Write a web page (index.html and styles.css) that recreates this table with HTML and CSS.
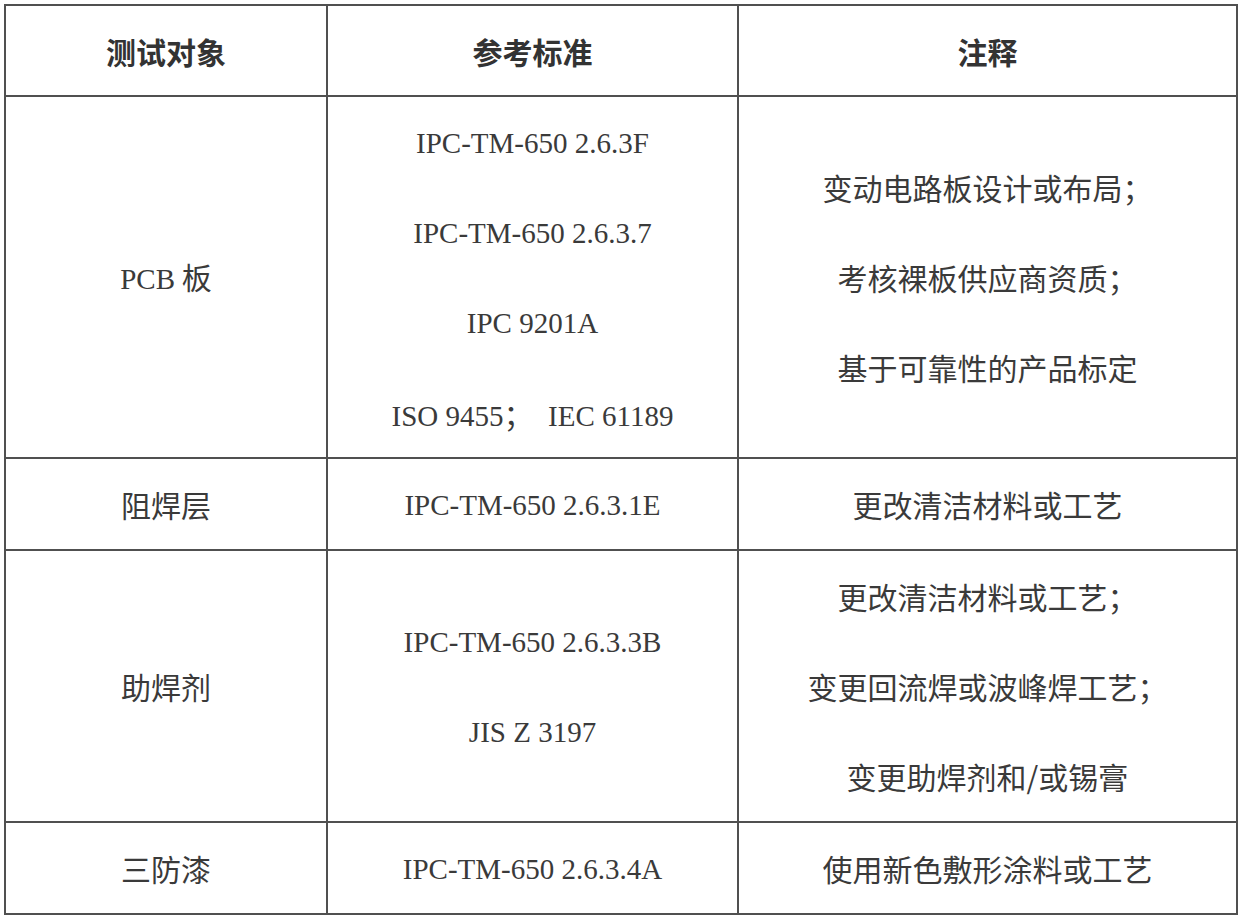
FILE: index.html
```html
<!DOCTYPE html>
<html lang="zh-CN">
<head>
<meta charset="utf-8">
<title>测试对象</title>
<link rel="stylesheet" href="styles.css">
</head>
<body>
<table class="spec">
  <colgroup>
    <col class="c1">
    <col class="c2">
    <col class="c3">
  </colgroup>
  <thead>
    <tr class="head">
      <th>测试对象</th>
      <th>参考标准</th>
      <th>注释</th>
    </tr>
  </thead>
  <tbody>
    <tr>
      <td class="cn"><span class="en">PCB</span> 板</td>
      <td class="en">
        <div class="ln">IPC-TM-650 2.6.3F</div>
        <div class="ln">IPC-TM-650 2.6.3.7</div>
        <div class="ln">IPC 9201A</div>
        <div class="ln">ISO 9455<span class="cn">；</span>&nbsp;&nbsp;IEC 61189</div>
      </td>
      <td class="cn">
        <div class="ln">变动电路板设计或布局；</div>
        <div class="ln">考核裸板供应商资质；</div>
        <div class="ln">基于可靠性的产品标定</div>
      </td>
    </tr>
    <tr>
      <td class="cn">阻焊层</td>
      <td class="en"><div class="ln">IPC-TM-650 2.6.3.1E</div></td>
      <td class="cn"><div class="ln">更改清洁材料或工艺</div></td>
    </tr>
    <tr>
      <td class="cn">助焊剂</td>
      <td class="en">
        <div class="ln">IPC-TM-650 2.6.3.3B</div>
        <div class="ln">JIS Z 3197</div>
      </td>
      <td class="cn">
        <div class="ln">更改清洁材料或工艺；</div>
        <div class="ln">变更回流焊或波峰焊工艺；</div>
        <div class="ln">变更助焊剂和/或锡膏</div>
      </td>
    </tr>
    <tr>
      <td class="cn">三防漆</td>
      <td class="en"><div class="ln">IPC-TM-650 2.6.3.4A</div></td>
      <td class="cn"><div class="ln">使用新色敷形涂料或工艺</div></td>
    </tr>
  </tbody>
</table>
</body>
</html>
```
FILE: styles.css
```css
html, body {
  margin: 0;
  padding: 0;
  background: #ffffff;
}
body {
  padding: 4px 3px 0 4px;
}
.spec {
  width: 1232px;
  border-collapse: collapse;
  table-layout: fixed;
  color: #3a3a3a;
}
.c1 { width: 322px; }
.c2 { width: 411px; }
.c3 { width: 499px; }
.spec th,
.spec td {
  border: 2px solid #505050;
  padding: 0;
  text-align: center;
  vertical-align: middle;
}
.spec th {
  height: 89px;
  font-family: "Noto Sans CJK SC", "Noto Sans", sans-serif;
  font-weight: 700;
  font-size: 30px;
  color: #333333;
}
.cn {
  font-family: "Noto Sans CJK SC", "Noto Sans", sans-serif;
  font-size: 30px;
  font-weight: 400;
}
.en {
  font-family: "Liberation Serif", "Noto Sans CJK SC", serif;
  font-size: 29px;
}
td.cn, td.en {
  line-height: 90px;
}
.ln {
  height: 90px;
  line-height: 90px;
  white-space: nowrap;
}
.en .ln {
  padding-top: 3px;
  height: 87px;
  line-height: 87px;
}
```
